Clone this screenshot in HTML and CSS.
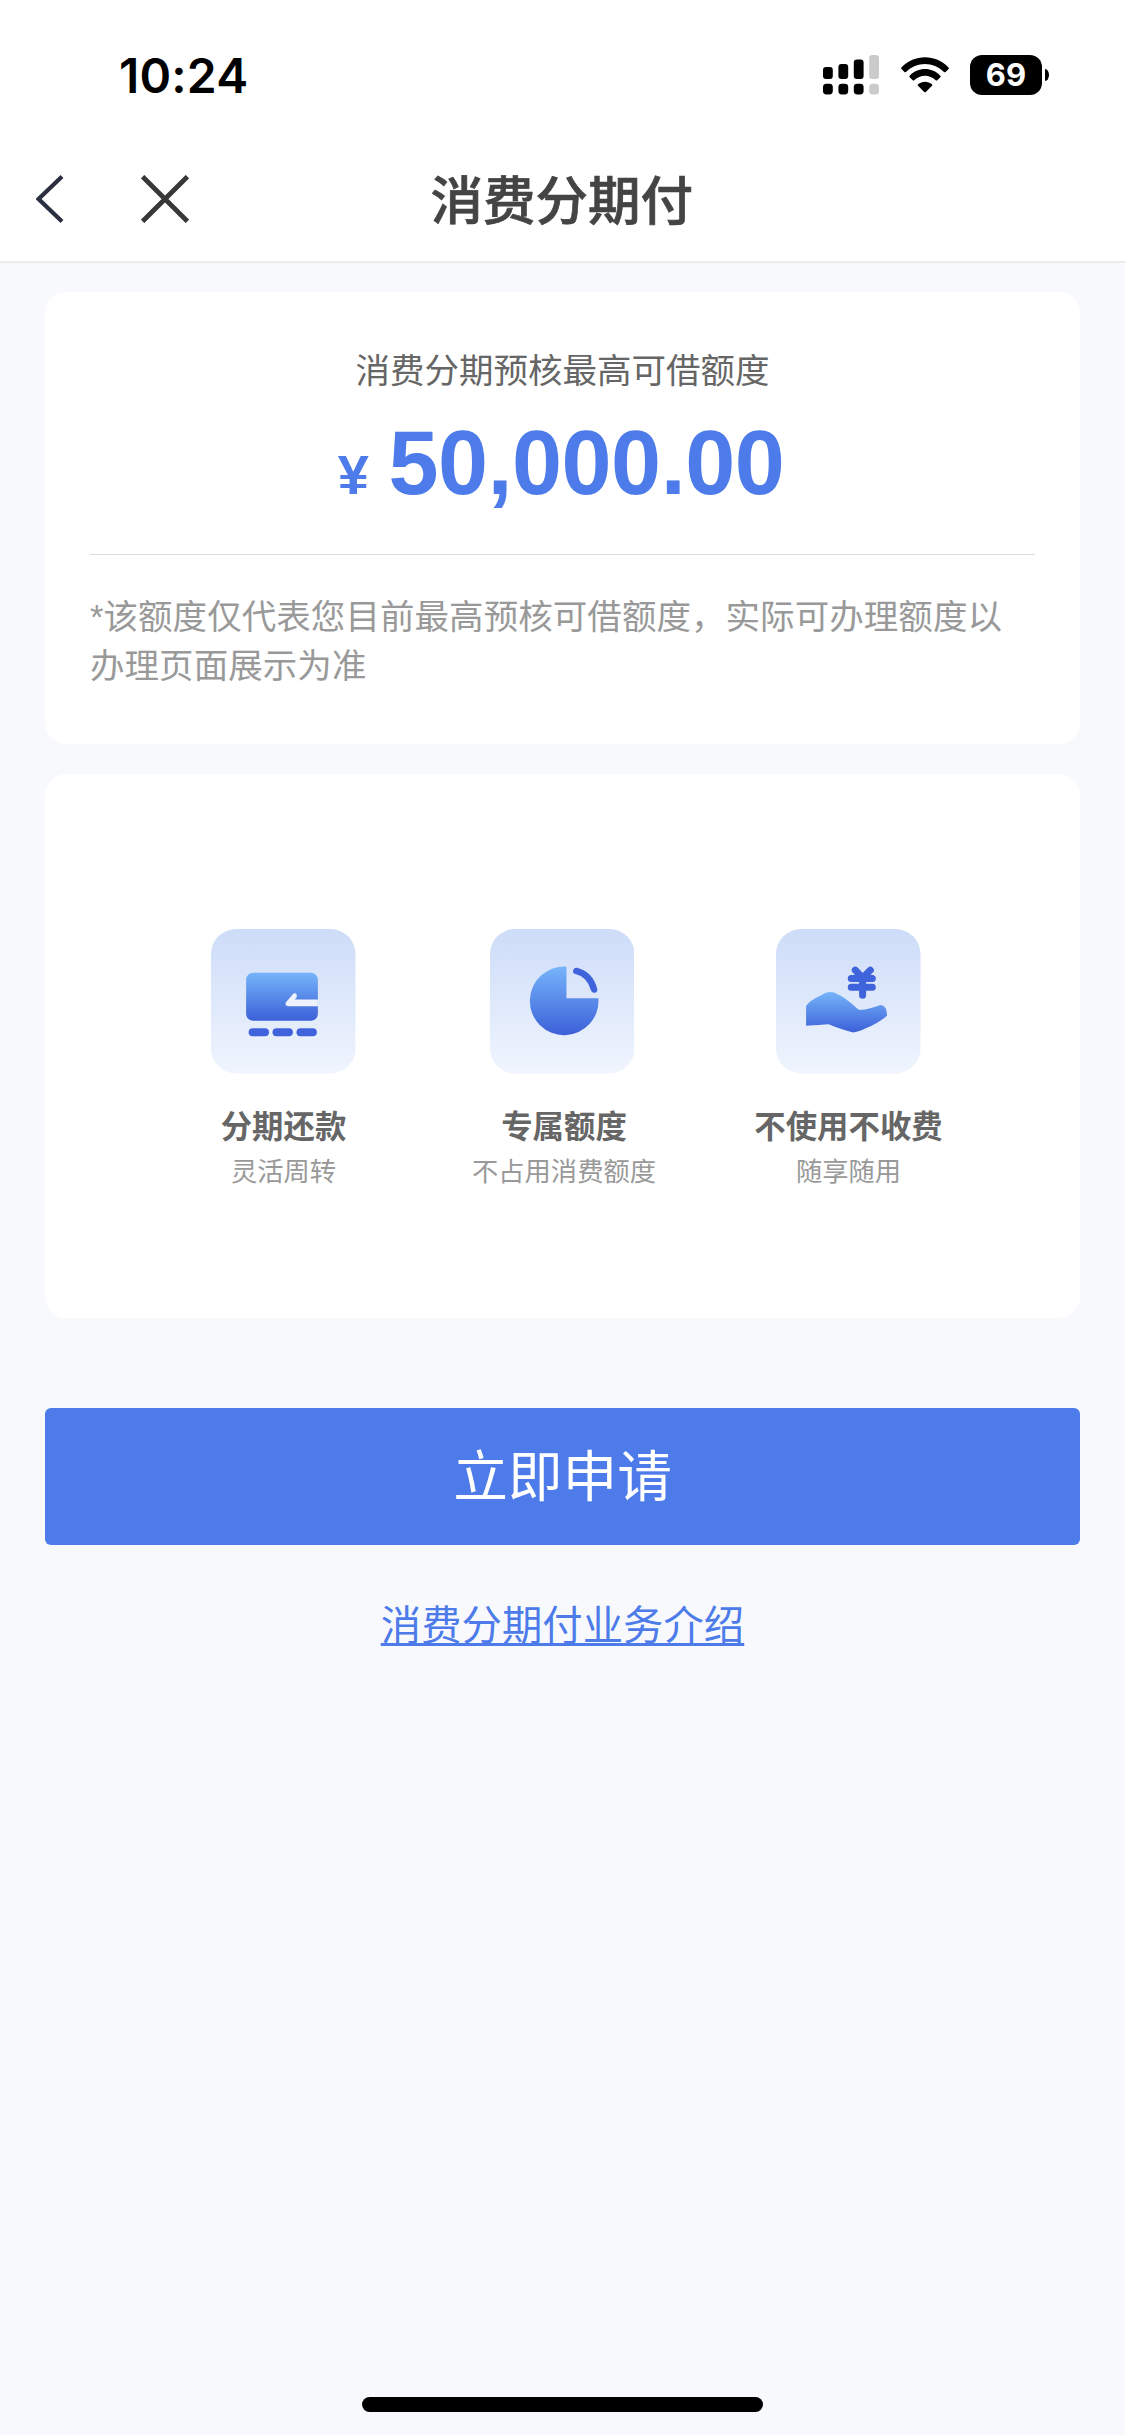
FILE: index.html
```html
<!DOCTYPE html>
<html lang="zh-CN">
<head>
<meta charset="utf-8">
<title>消费分期付</title>
<link rel="stylesheet" href="styles.css">
</head>
<body>
<div class="screen">
  <header class="header">
    <div class="status">
      <span class="time">10:24</span>
      <div class="indicators">
        <svg class="signal" width="56" height="40" viewBox="0 0 56 40">
          <rect x="0" y="12" width="9.8" height="12" rx="3"/><rect x="15.4" y="9" width="9.8" height="15" rx="3"/><rect x="30.8" y="4.5" width="9.8" height="19.5" rx="3"/>
          <rect x="0" y="28.7" width="9.8" height="10.7" rx="3.4"/><rect x="15.4" y="28.7" width="9.8" height="10.7" rx="3.4"/><rect x="30.8" y="28.7" width="9.8" height="10.7" rx="3.4"/>
          <g fill="#cbcbcb"><rect x="46.2" y="0" width="9.8" height="24" rx="3"/><rect x="46.2" y="28.7" width="9.8" height="10.7" rx="3.4"/></g>
        </svg>
        <svg class="wifi" width="48" height="36" viewBox="0 0 48 36">
          <path d="M.5 10.4C13.2-3.2 34.8-3.2 47.5 10.4Q48.3 11.3 47.5 12.1L44.6 15Q43.8 15.7 43 14.9C32.6 4.2 15.4 4.2 5 14.9Q4.2 15.7 3.4 15L.5 12.1Q-.3 11.3 .5 10.4Z"/>
          <path d="M8.7 18.7C17 9.9 31 9.9 39.3 18.7Q40.1 19.5 39.3 20.3L36.3 23.2Q35.5 24 34.7 23.2C28.7 17.2 19.3 17.2 13.3 23.2Q12.5 24 11.7 23.2L8.7 20.3Q7.9 19.5 8.7 18.7Z"/>
          <path d="M17 27.2C21 23.8 27 23.8 31 27.2Q31.8 28 31 28.8L24.8 34.9Q24 35.7 23.2 34.9L17 28.8Q16.2 28 17 27.2Z"/>
        </svg>
        <div class="battery"><span class="level">69</span><i class="tip"></i></div>
      </div>
    </div>
    <nav class="nav">
      <svg width="28" height="48" viewBox="0 0 28 48"><path d="M26 1.6 2.6 24 26 46.4" fill="none" stroke="#2b3040" stroke-width="4.2"/></svg>
      <svg width="48" height="48" viewBox="0 0 48 48"><path d="M1.6 1.6 46.4 46.4M46.4 1.6 1.6 46.4" fill="none" stroke="#383838" stroke-width="4.8"/></svg>
      <h1 class="title">消费分期付</h1>
    </nav>
  </header>
  <main class="content">
    <section class="card quota">
      <div class="label">消费分期预核最高可借额度</div>
      <div class="amount"><span class="currency">¥</span><span>50,000.00</span></div>
      <p class="note">*该额度仅代表您目前最高预核可借额度，实际可办理额度以办理页面展示为准</p>
    </section>
    <section class="card features">
      <div class="feature">
        <svg class="icon" viewBox="0 0 144 144">
          <defs>
            <linearGradient id="tile" x1="0" y1="0" x2="0" y2="1"><stop offset="0" stop-color="#cddcf8"/><stop offset="1" stop-color="#f0f5fe"/></linearGradient>
            <linearGradient id="blue" x1="0" y1="0" x2="0" y2="1"><stop offset="0" stop-color="#76b4fa"/><stop offset="1" stop-color="#3c60d8"/></linearGradient>
          </defs>
          <rect width="144" height="144" rx="25" fill="url(#tile)"/>
          <rect x="35" y="43.5" width="71.5" height="48" rx="7" fill="url(#blue)"/>
          <path d="M106.5 70.3H83.5L85.5 67.8Q86 63 82 64.5L74.5 73.3Q73.5 76.7 77 77H106.5Z" fill="#edf2fc"/>
          <g fill="#3f63da"><rect x="37.5" y="99" width="20.3" height="8" rx="4"/><rect x="61.3" y="99" width="20.3" height="8" rx="4"/><rect x="85.2" y="99" width="20.3" height="8" rx="4"/></g>
        </svg>
        <h2 class="name">分期还款</h2>
        <p class="desc">灵活周转</p>
      </div>
      <div class="feature feature-quota">
        <svg class="icon" viewBox="0 0 144 144">
          <rect width="144" height="144" rx="25" fill="url(#tile)"/>
          <path d="M76.2 37.5V69H108A34.2 34.2 0 1 1 76.2 37.5Z" fill="url(#blue)"/>
          <path d="M86 41.8Q99.5 45 103.7 60.3" fill="none" stroke="#3f63da" stroke-width="6.5" stroke-linecap="round"/>
        </svg>
        <h2 class="name">专属额度</h2>
        <p class="desc">不占用消费额度</p>
      </div>
      <div class="feature feature-free">
        <svg class="icon" viewBox="0 0 144 144">
          <rect width="144" height="144" rx="25" fill="url(#tile)"/>
          <path d="M30 76.5Q34 71 44 66.5Q51.5 61 58.5 63.5Q70 68.5 82 80.2Q88 81.7 104 75.8Q110.5 76 110.7 86.5Q100 95 90 98.7Q80 103.5 76 103Q60 98.5 52.5 95Q44 95.5 30 96.5Z" fill="url(#blue)"/>
          <path d="M79 41 86.3 48.8 94 41M75 49.3H96M75 58H96M86.3 49V66" fill="none" stroke="#3f63da" stroke-width="7" stroke-linecap="round" stroke-linejoin="round"/>
        </svg>
        <h2 class="name">不使用不收费</h2>
        <p class="desc">随享随用</p>
      </div>
    </section>
    <button class="apply" type="button">立即申请</button>
    <a class="intro" href="#">消费分期付业务介绍</a>
  </main>
  <div class="home"></div>
</div>
</body>
</html>
```
FILE: styles.css
```css
* { box-sizing: border-box; margin: 0; padding: 0; }
body {
  background: #f8f9fd;
  font-family: "Noto Sans CJK SC", sans-serif;
}
.screen { display: flex; flex-direction: column; min-height: 2435px; }
.header { height: 263px; background: #fff; border-bottom: 2px solid #ececee; }
.status {
  display: flex;
  justify-content: space-between;
  height: 131px;
  padding: 55px 76px 0 119px;
}
.time {
  font: 600 48px/41px Inter, sans-serif;
  letter-spacing: 0.2px;
}
.indicators { display: flex; align-items: flex-start; }
.wifi { margin: 1.5px 21.5px 0 22px; }
.battery { display: flex; align-items: center; gap: 3px; }
.level {
  width: 72px;
  height: 39.5px;
  border-radius: 12px;
  background: #000;
  color: #fff;
  font: 700 31px/40px Inter, sans-serif;
  text-align: center;
}
.tip { width: 4px; height: 12px; background: #000; border-radius: 0 4px 4px 0 / 0 6px 6px 0; }
.nav {
  display: grid;
  grid-template-columns: 28px 48px 1fr;
  column-gap: 77px;
  align-items: center;
  height: 130px;
  padding: 5px 432px 0 36px;
}
.title {
  justify-self: end;
  white-space: nowrap;
  font-size: 52.5px;
  font-weight: 500;
  -webkit-text-stroke: 0.7px #444;
  line-height: 76px;
  padding-bottom: 4px;
  color: #444;
}
.content { display: flex; flex-direction: column; padding: 29px 45px 0; }
.card { background: #fff; border-radius: 21px; }
.quota { height: 452px; padding: 52px 45px 0; text-align: center; }
.label { font-size: 34.5px; line-height: 48px; color: #666; }
.amount {
  display: flex;
  justify-content: center;
  align-items: baseline;
  height: 142px;
  margin-top: 21px;
  margin-bottom: 1px;
  padding-right: 3px;
  border-bottom: 1px solid #ddd;
  color: #4d7be9;
  font: 700 90px/100px "Liberation Sans", sans-serif;
  letter-spacing: -0.5px;
}
.currency { margin-right: 20px; font-size: 56px; }
.note {
  margin-top: 38px;
  padding-right: 10px;
  font: 400 34.5px/49.3px "Liberation Sans", "Noto Sans CJK SC", sans-serif;
  letter-spacing: 0.06px;
  color: #999;
  text-align: left;
}
.features {
  display: flex;
  align-items: flex-start;
  height: 543.5px;
  margin-top: 30px;
  padding: 155px 0 0 143.5px;
}
.feature { width: 190px; display: flex; flex-direction: column; align-items: center; }
.feature-quota { margin-left: 88.5px; }
.feature-free { margin-left: 96.5px; }
.feature-quota .name, .feature-quota .desc { padding-left: 4px; }
.icon { width: 144.5px; height: 144.5px; }
.name { margin-top: 29px; font-size: 31.4px; line-height: 44px; font-weight: 700; color: #666; white-space: nowrap; }
.desc { margin-top: 8.5px; font-size: 26.3px; line-height: 30px; color: #999; white-space: nowrap; }
.apply {
  height: 137px;
  margin-top: 90.5px;
  padding-bottom: 7px;
  border: 0;
  border-radius: 6px;
  background: #4d7be9;
  color: #fff;
  font: 400 54.7px/80px "Noto Sans CJK SC", sans-serif;
}
.intro {
  align-self: center;
  margin-top: 48px;
  font-size: 40.4px;
  line-height: 60px;
  color: #4d7be9;
  text-decoration: underline 2.5px;
  text-underline-offset: 2.5px;
  text-decoration-skip-ink: none;
}
.home { width: 401px; height: 14.5px; margin: auto auto 23.5px; border-radius: 8px; background: #000; }
```
